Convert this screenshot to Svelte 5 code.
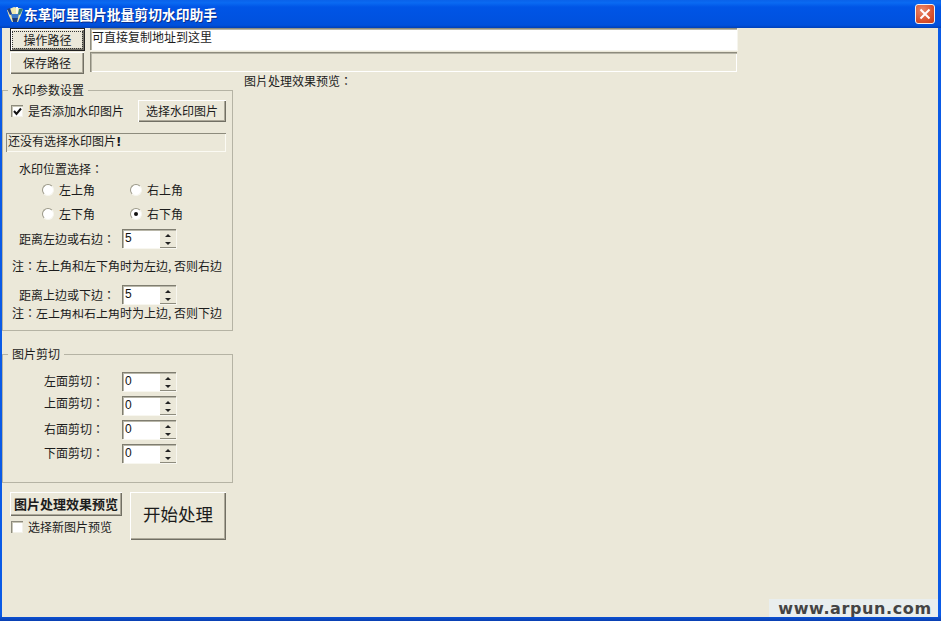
<script>
  const crops = [
    { label: '左面剪切：', value: 0, cls: 'c1' },
    { label: '上面剪切：', value: 0, cls: 'c2' },
    { label: '右面剪切：', value: 0, cls: 'c3' },
    { label: '下面剪切：', value: 0, cls: 'c4' }
  ];
</script>

{#snippet spinner(value)}
  <div class="spin">
    <span class="spin-value">{value}</span>
    <div class="spin-btns">
      <span class="arrow up"></span>
      <span class="arrow down"></span>
    </div>
  </div>
{/snippet}

{#snippet radio(label, on)}
  <div class="radio-item">
    <span class="radio" class:on></span>
    <span>{label}</span>
  </div>
{/snippet}

<div class="window">
  <header class="titlebar">
    <svg class="app-icon" width="20" height="20" viewBox="0 0 20 20">
      <path d="M3 6 L10 3 L19 5 L17 11 L14 18 L8 18 L5 12 Z" fill="#f0e9b0" />
      <path d="M3 5 L6 4 L8 10 L6 11 Z" fill="#1f3f86" />
      <path d="M12 3 L14 3 L14 9 L12 10 Z" fill="#f8f8f0" />
      <path d="M15 5 L19 5 L16 11 L14 10 Z" fill="#2d7f7a" />
      <path d="M7 10 L15 10 L14 14 L8 14 Z" fill="#3c78c8" />
      <path d="M8 14 L14 14 L13 18 L9 18 Z" fill="#1c3b78" />
    </svg>
    <span class="title">东革阿里图片批量剪切水印助手</span>
    <div class="close">
      <svg width="14" height="14" viewBox="0 0 14 14">
        <path d="M2.5 2.5 L11.5 11.5 M11.5 2.5 L2.5 11.5" stroke="#fff" stroke-width="2" />
      </svg>
    </div>
  </header>

  <main class="client">
    <div class="paths">
      <div class="path-row first">
        <button class="btn path-btn focused"><span>操作路径</span></button>
        <div class="field white">可直接复制地址到这里</div>
      </div>
      <div class="path-row second">
        <button class="btn path-btn">保存路径</button>
        <div class="field"></div>
      </div>
    </div>

    <div class="body">
      <aside class="left">
        <fieldset class="group mark">
          <legend>水印参数设置</legend>
          <div class="check-row">
            <span class="check">
              <svg width="9" height="9" viewBox="0 0 9 9">
                <path d="M1 4 L3.5 7 L8 1.5" fill="none" stroke="#111" stroke-width="2" />
              </svg>
            </span>
            <span class="check-label">是否添加水印图片</span>
            <button class="btn pick">选择水印图片</button>
          </div>
          <div class="status">还没有选择水印图片<b>!</b></div>
          <div class="line pos-title">水印位置选择：</div>
          <div class="radios r1">
            {@render radio('左上角', false)}
            {@render radio('右上角', false)}
          </div>
          <div class="radios r2">
            {@render radio('左下角', false)}
            {@render radio('右下角', true)}
          </div>
          <div class="spin-row s1">
            <span class="spin-label">距离左边或右边：</span>
            {@render spinner(5)}
          </div>
          <div class="line note n1">注：左上角和左下角时为左边, 否则右边</div>
          <div class="spin-row s2">
            <span class="spin-label">距离上边或下边：</span>
            {@render spinner(5)}
          </div>
          <div class="line note n2">注：<span class="cut">左上角和右上角</span>时为上边, 否则下边</div>
        </fieldset>

        <fieldset class="group crop">
          <legend>图片剪切</legend>
          {#each crops as c}
            <div class="crop-row {c.cls}">
              <span class="crop-label">{c.label}</span>
              {@render spinner(c.value)}
            </div>
          {/each}
        </fieldset>

        <div class="actions">
          <div class="actions-left">
            <button class="btn preview">图片处理效果预览</button>
            <div class="new-pic">
              <span class="check"></span>
              <span>选择新图片预览</span>
            </div>
          </div>
          <button class="btn start">开始处理</button>
        </div>
      </aside>
      <section class="preview-area">图片处理效果预览：</section>
    </div>

    <div class="watermark">www.arpun.com</div>
  </main>
</div>

<style>
  :global(body) {
    margin: 0;
    background: #0055e5;
  }

  .window {
    width: 941px;
    height: 621px;
    display: flex;
    flex-direction: column;
    overflow: hidden;
    position: relative;
    background: linear-gradient(180deg, #0a5ae6 0, #0a5ae6 99%, #0a3fb0 100%);
    font-family: "Noto Sans CJK SC", "Liberation Sans", sans-serif;
    font-size: 12px;
    line-height: 16px;
    color: #1c1c1c;
  }

  .titlebar {
    height: 28px;
    flex: none;
    display: flex;
    align-items: center;
    padding: 0 6px 0 4px;
    background: linear-gradient(180deg, #0a62ea 0%, #0a6af2 10%, #0055e6 25%, #0052e0 70%, #0050dc 90%, #0040b8 100%);
  }

  .app-icon {
    flex: none;
  }

  .title {
    margin-left: 0;
    color: #fff;
    font-size: 13.8px;
    font-weight: 700;
    text-shadow: 1px 1px 0 #0b2f8c;
  }

  .close {
    margin-left: auto;
    width: 20px;
    height: 20px;
    box-sizing: border-box;
    border: 1px solid #f4f0ee;
    border-radius: 3px;
    background: radial-gradient(circle at 35% 30%, #e98a6c, #d9532f 60%, #c23a1a);
    display: flex;
    align-items: center;
    justify-content: center;
  }

  .client {
    flex: none;
    position: relative;
    height: 589px;
    margin: 0 3px 0 2px;
    background: #ebe8d9;
    overflow: hidden;
  }

  .paths {
    padding-left: 8px;
    height: 46px;
  }

  .path-row {
    display: flex;
    align-items: flex-start;
    gap: 6px;
  }

  .path-row.second {
    margin-top: 2px;
  }

  .btn {
    font: inherit;
    color: inherit;
    padding: 0;
    margin: 0;
    background: #ebe8d9;
    border: none;
    box-shadow: inset 1px 1px 0 #fff, inset -1px -1px 0 #716f64, inset -2px -2px 0 #aca899;
    display: flex;
    align-items: center;
    justify-content: center;
  }

  .path-btn {
    width: 74px;
    height: 22px;
  }

  .path-btn.focused {
    box-shadow: 0 0 0 1px #222, inset 1px 1px 0 #fff, inset -1px -1px 0 #716f64, inset -2px -2px 0 #aca899;
    width: 73px;
    margin: 1px 0 0 1px;
    height: 21px;
  }

  .path-btn.focused span {
    padding: 0 9px;
    outline: 1px dotted #333;
    outline-offset: 1px;
    line-height: 14px;
  }

  .field {
    width: 647px;
    height: 20px;
    box-sizing: border-box;
    padding: 0 2px;
    line-height: 16px;
    box-shadow: inset 1px 1px 0 #8d8b7d, inset 2px 2px 0 #b8b6a8, inset -1px -1px 0 #fff;
  }

  .field.white {
    background: #fff;
    height: 22px;
    padding-top: 1px;
    box-shadow: inset 1px 1px 0 #8d8b7d, inset 2px 2px 0 #b8b6a8, 1px 1px 0 #f6f5ee;
  }

  .body {
    display: flex;
  }

  .left {
    width: 230px;
    flex: none;
  }

  .preview-area {
    margin: -1px 0 0 12px;
    height: 16px;
    font-family: "Noto Sans CJK TC", "Noto Sans CJK SC", sans-serif;
  }

  .group {
    margin: 0;
    padding: 0;
    border: 1px solid #b5b3a4;
    box-sizing: border-box;
    width: 231px;
    position: relative;
  }

  .group legend {
    margin-left: 5px;
    padding: 0 4px;
    line-height: 14px;
    font-size: 12px;
  }

  .group.mark {
    margin-top: 9px;
    height: 248px;
  }

  .group.crop {
    margin-top: 16px;
    height: 136px;
  }

  .check-row {
    display: flex;
    align-items: center;
    height: 22px;
    margin-top: 3px;
    padding-left: 8px;
  }

  .check {
    width: 12px;
    height: 12px;
    flex: none;
    box-sizing: border-box;
    background: #fff;
    box-shadow: inset 1px 1px 0 #8d8b7d, inset 2px 2px 0 #c9c7b8, inset -1px -1px 0 #f3f2ea;
    display: flex;
    align-items: center;
    justify-content: center;
  }

  .check-label {
    margin-left: 5px;
  }

  .pick {
    width: 88px;
    height: 22px;
    margin-left: 14px;
  }

  .status {
    width: 220px;
    height: 19px;
    margin: 11px 0 0 3px;
    padding-left: 2px;
    box-sizing: border-box;
    line-height: 15px;
    box-shadow: inset 1px 1px 0 #8d8b7d, inset -1px -1px 0 #fbfaf3;
  }

  .status b {
    font-family: "DejaVu Sans", sans-serif;
    font-weight: 700;
  }

  .line {
    height: 16px;
    white-space: nowrap;
  }

  .pos-title,
  .note,
  .spin-label,
  .crop-label {
    font-family: "Noto Sans CJK TC", "Noto Sans CJK SC", sans-serif;
  }

  .pos-title {
    margin-top: 9px;
    padding-left: 16px;
  }

  .radios {
    display: flex;
    padding-left: 39px;
    height: 16px;
  }

  .radios.r1 {
    margin-top: 5px;
  }

  .radios.r2 {
    margin-top: 8px;
  }

  .radio-item {
    width: 88px;
    display: flex;
    align-items: center;
    gap: 5px;
  }

  .radio {
    width: 12px;
    height: 12px;
    box-sizing: border-box;
    border-radius: 50%;
    background: #fff;
    border: 1px solid;
    border-color: #9a9888 #f7f6ef #f7f6ef #9a9888;
    display: flex;
    align-items: center;
    justify-content: center;
  }

  .radio.on::after {
    content: "";
    width: 4px;
    height: 4px;
    border-radius: 50%;
    background: #111;
  }

  .spin-row,
  .crop-row {
    display: flex;
    align-items: center;
    height: 19px;
  }

  .spin-label {
    width: 119px;
    padding-left: 16px;
    box-sizing: border-box;
    white-space: nowrap;
  }

  .s1 {
    margin-top: 7px;
  }

  .s2 {
    margin-top: 11px;
  }

  .note {
    padding-left: 9px;
  }

  .n1 {
    margin-top: 10px;
  }

  .n2 {
    margin-top: 1px;
  }

  .cut {
    display: inline-block;
    clip-path: inset(4px 0 0 0);
  }

  .spin {
    width: 54px;
    height: 19px;
    box-sizing: border-box;
    flex: none;
    display: flex;
    background: #fff;
    box-shadow: inset 1px 1px 0 #7f7d70, inset 2px 2px 0 #b8b6a8, 1px 1px 0 #f8f7f0;
  }

  .spin-value {
    flex: 1;
    padding: 2px 0 0 3px;
    font-family: "Liberation Sans", sans-serif;
    font-size: 12px;
    line-height: 14px;
    color: #111;
  }

  .spin-btns {
    width: 16px;
    margin: 2px 0 0;
    display: flex;
    flex-direction: column;
    background: #ebe8d9;
    box-shadow: inset 0 -1px 0 #8d8b7d, inset 0 -9px 0 #ebe8d9, inset 0 -8px 0 #8d8b7d;
  }

  .arrow {
    height: 8px;
    display: flex;
    align-items: center;
    justify-content: center;
  }

  .arrow::after {
    content: "";
    border-left: 3px solid transparent;
    border-right: 3px solid transparent;
  }

  .arrow.up::after {
    border-bottom: 3px solid #222;
  }

  .arrow.down::after {
    border-top: 3px solid #222;
  }

  .crop-label {
    width: 119px;
    padding-left: 41px;
    box-sizing: border-box;
  }

  .crop .c1 {
    margin-top: 11px;
  }

  .crop .c2,
  .crop .c3,
  .crop .c4 {
    margin-top: 5px;
  }

  .crop .c1 .crop-label,
  .crop .c3 .crop-label,
  .crop .c4 .crop-label {
    transform: translateY(-1px);
  }

  .crop .c2 .crop-label {
    transform: translateY(-3px);
  }

  .actions {
    display: flex;
    margin-top: 9px;
    padding-left: 8px;
    gap: 8px;
  }

  .preview {
    width: 112px;
    height: 24px;
    font-weight: 700;
    font-size: 13px;
    white-space: nowrap;
  }

  .new-pic {
    display: flex;
    align-items: center;
    gap: 5px;
    margin: 5px 0 0 1px;
    height: 12px;
  }

  .start {
    width: 96px;
    height: 48px;
    padding-bottom: 5px;
    font-size: 17.5px;
    font-weight: 400;
  }

  .watermark {
    position: absolute;
    right: -3px;
    bottom: -4px;
    width: 172px;
    height: 22px;
    background: #e9eeee;
    color: #444;
    font-family: "DejaVu Sans", sans-serif;
    font-weight: 700;
    font-size: 16px;
    line-height: 19px;
    letter-spacing: 0.6px;
    text-align: center;
    white-space: nowrap;
  }
</style>
